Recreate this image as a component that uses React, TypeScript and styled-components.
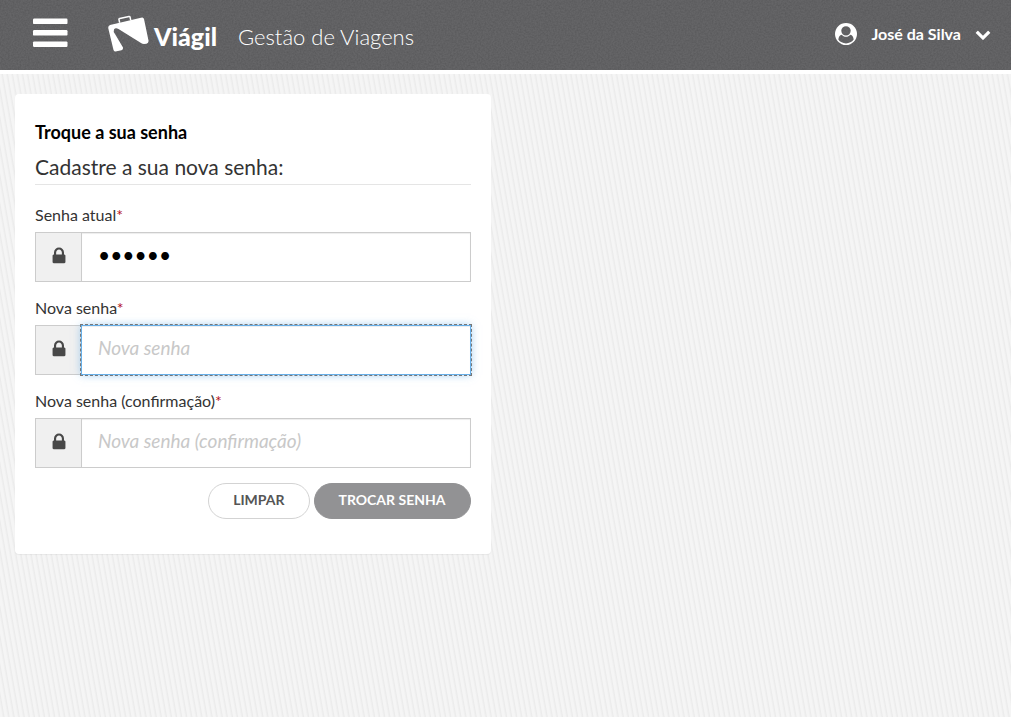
import React, { useId, useState } from 'react';
import styled, { createGlobalStyle, css } from 'styled-components';

const noise = encodeURIComponent(
  "<svg xmlns='http://www.w3.org/2000/svg' width='120' height='120'><filter id='n'><feTurbulence type='fractalNoise' baseFrequency='0.6' numOctaves='2' stitchTiles='stitch'/><feColorMatrix values='0 0 0 0 0 0 0 0 0 0 0 0 0 0 0 0.2 0 0 0 -0.06'/></filter><rect width='120' height='120' filter='url(#n)'/></svg>"
);

const GlobalStyle = createGlobalStyle`
  *, *::before, *::after { box-sizing: border-box; }
  body {
    margin: 0;
    min-height: 100vh;
    color: #333;
    font-family: Lato, "Liberation Sans", sans-serif;
    font-size: 16px;
    line-height: 24px;
    background: repeating-linear-gradient(80deg, #f5f5f5 0, #f5f5f5 2px, #ebebeb 4px, #f5f5f5 5px);
  }
`;

const Header = styled.header`
  display: flex;
  align-items: center;
  height: 74px;
  padding: 0 20px 4px 32px;
  border-bottom: 4px solid #fff;
  color: #fff;
  background: #656567 url("data:image/svg+xml,${noise}");
`;

const PlainButton = styled.button`
  display: flex;
  align-items: center;
  padding: 0;
  border: 0;
  color: inherit;
  background: none;
  font: inherit;
  cursor: pointer;
`;

const Brand = styled.a`
  display: flex;
  align-items: center;
  margin-left: 39px;
  padding-top: 2px;
  color: inherit;
  text-decoration: none;
`;

const BrandName = styled.span`
  margin: 4px 0 0 4px;
  font-size: 25px;
  font-weight: 900;
  line-height: 32px;
`;

const AppTitle = styled.span`
  flex: 1;
  margin: 8px 0 0 21px;
  font-size: 22px;
  font-weight: 300;
  line-height: 32px;
`;

const UserButton = styled(PlainButton)`
  gap: 14px;
  padding-top: 2px;
  font-weight: 700;
`;

const Icon = styled.svg`
  display: block;
  fill: currentColor;
`;

const Content = styled.main`
  padding: 20px 15px;
`;

const Card = styled.section`
  width: calc(50% - 15px);
  padding: 20px 20px 35px;
  border-radius: 4px;
  background: #fff;
  box-shadow: 0 1px 1px rgba(0, 0, 0, 0.05);
`;

const Title = styled.h1`
  margin: 6px 0;
  color: #000;
  font-size: 18px;
  font-weight: 700;
  line-height: 24px;
`;

const Legend = styled.h2`
  margin: 0 0 19px;
  padding: 2px 0;
  border-bottom: 1px solid #e5e5e5;
  font-size: 21px;
  font-weight: 400;
  line-height: 30px;
`;

const Field = styled.div`
  margin-bottom: 15px;
`;

const Label = styled.label`
  display: block;
  margin-bottom: 6px;
  line-height: 22px;
`;

const Required = styled.span`
  color: #b5121b;
`;

const InputGroup = styled.div`
  display: flex;
  height: 50px;
`;

const Addon = styled.span`
  display: flex;
  align-items: center;
  justify-content: center;
  width: 46px;
  padding-bottom: 3px;
  border: 1px solid #ccc;
  border-right: 0;
  color: #484848;
  background: #f0f0f0;
`;

const active = css`
  border-color: #66afe9;
  outline: 1px dashed #777;
  box-shadow: inset 0 1px 1px rgba(0, 0, 0, 0.075), 0 0 8px rgba(102, 175, 233, 0.6);
`;

const Input = styled.input<{ $active: boolean }>`
  flex: 1;
  min-width: 0;
  padding: 0 16px 4px;
  border: 1px solid #ccc;
  border-radius: 0;
  outline: 0;
  color: #000;
  background: #fff;
  font: 21px/28px Lato, "Liberation Sans", sans-serif;
  box-shadow: inset 0 1px 1px rgba(0, 0, 0, 0.075);
  &:placeholder-shown { font-size: 19px; font-style: italic; }
  &::placeholder { color: #c8c8c8; opacity: 1; }
  ${({ $active }) => $active && active}
`;

const Actions = styled.div`
  display: flex;
  justify-content: flex-end;
  gap: 4px;
`;

const Button = styled.button<{ $primary?: boolean }>`
  height: 36px;
  padding: 0 24px 2px;
  border: 1px solid ${({ $primary }) => ($primary ? '#929294' : '#d3d3d3')};
  border-radius: 18px;
  color: ${({ $primary }) => ($primary ? '#fff' : '#555')};
  background: ${({ $primary }) => ($primary ? '#929294' : '#fff')};
  font: 700 14px/20px Lato, "Liberation Sans", sans-serif;
  text-transform: uppercase;
  cursor: pointer;
`;

function MenuIcon() {
  return (
    <Icon width="36" height="30" viewBox="0 0 36 30" aria-hidden="true">
      <rect x="1" y="0.5" width="34.5" height="5.6" rx="1.2" />
      <rect x="1" y="12" width="34.5" height="5.6" rx="1.2" />
      <rect x="1" y="23.4" width="34.5" height="5.6" rx="1.2" />
    </Icon>
  );
}

function SuitcaseLogo() {
  return (
    <Icon width="43" height="38" viewBox="0 0 43 38" aria-hidden="true">
      <path d="M3 10 35 2.4Q36.500 2.200 37 4L41.600 26Q41.500 28 39.500 28.700L37 29Q35.500 29 34 28L11.500 14Q8.500 12.200 7 14.500 6 16.500 8 19L16 32.500Q16.500 34.500 14.500 35.200L8.500 36.600Q7 36.500 6.500 35L1.200 13Q1 10.800 3 10Z" />
      <path d="m12.700 7.700-.8-3.300q0-.7.8-.9L22 1.400q.8-.1 1 .6l.8 3.400" fill="none" stroke="currentColor" strokeWidth="1.500" />
    </Icon>
  );
}

function UserIcon() {
  return (
    <Icon width="22" height="22" viewBox="0 0 1792 1792" aria-hidden="true">
      <path fillRule="evenodd" d="M1523 1339q-22-155-87.500-257.500t-184.500-118.500q-67 74-159.500 115.500t-195.500 41.500-195.500-41.500-159.500-115.500q-119 16-184.500 118.500t-87.500 257.500q106 150 271 237.500t356 87.500 356-87.500 271-237.500zm-243-699q0-159-112.500-271.500t-271.500-112.500-271.500 112.500-112.500 271.500 112.500 271.500 271.500 112.500 271.500-112.500 112.500-271.500zm512 256q0 182-71 347.500t-190.500 286-285.500 191.500-349 71q-182 0-348-71t-286-191-191-286-71-348 71-348 191-286 286-191 348-71 348 71 286 191 191 286 71 348z" />
    </Icon>
  );
}

function ChevronIcon() {
  return (
    <Icon width="16" height="16" viewBox="0 0 1792 1792" aria-hidden="true">
      <path d="M1683 808l-742 741q-19 19-45 19t-45-19l-742-741q-19-19-19-45.500t19-45.500l166-165q19-19 45-19t45 19l531 531 531-531q19-19 45-19t45 19l166 165q19 19 19 45.500t-19 45.500z" />
    </Icon>
  );
}

function LockIcon() {
  return (
    <Icon width="20" height="20" viewBox="0 0 1792 1792" aria-hidden="true">
      <path d="M640 768h512v-192q0-106-75-181t-181-75-181 75-75 181v192zm832 96v576q0 40-28 68t-68 28h-960q-40 0-68-28t-28-68v-576q0-40 28-68t68-28h32v-192q0-184 132-316t316-132 316 132 132 316v192h32q40 0 68 28t28 68z" />
    </Icon>
  );
}

type PasswordFieldProps = {
  label: string;
  value: string;
  active: boolean;
  onChange: (value: string) => void;
  onFocus: () => void;
};

function PasswordField({ label, value, active, onChange, onFocus }: PasswordFieldProps) {
  const id = useId();
  return (
    <Field>
      <Label htmlFor={id}>{label}<Required>*</Required></Label>
      <InputGroup>
        <Addon><LockIcon /></Addon>
        <Input
          id={id}
          type="password"
          required
          placeholder={label}
          value={value}
          $active={active}
          onChange={(e) => onChange(e.target.value)}
          onFocus={onFocus}
        />
      </InputGroup>
    </Field>
  );
}

const labels = ['Senha atual', 'Nova senha', 'Nova senha (confirmação)'];

export default function App() {
  const [values, setValues] = useState(['123456', '', '']);
  const [current, setCurrent] = useState(1);
  return (
    <>
      <GlobalStyle />
      <Header>
        <PlainButton type="button" aria-label="Menu"><MenuIcon /></PlainButton>
        <Brand href="#">
          <SuitcaseLogo />
          <BrandName>Viágil</BrandName>
        </Brand>
        <AppTitle>Gestão de Viagens</AppTitle>
        <UserButton type="button">
          <UserIcon />
          José da Silva
          <ChevronIcon />
        </UserButton>
      </Header>
      <Content>
        <Card>
          <Title>Troque a sua senha</Title>
          <Legend>Cadastre a sua nova senha:</Legend>
          <form onSubmit={(e) => e.preventDefault()}>
            {labels.map((label, i) => (
              <PasswordField
                key={label}
                label={label}
                value={values[i]}
                active={current === i}
                onChange={(v) => setValues(values.map((old, j) => (j === i ? v : old)))}
                onFocus={() => setCurrent(i)}
              />
            ))}
            <Actions>
              <Button type="button" onClick={() => setValues(['', '', ''])}>Limpar</Button>
              <Button type="submit" $primary>Trocar senha</Button>
            </Actions>
          </form>
        </Card>
      </Content>
    </>
  );
}
